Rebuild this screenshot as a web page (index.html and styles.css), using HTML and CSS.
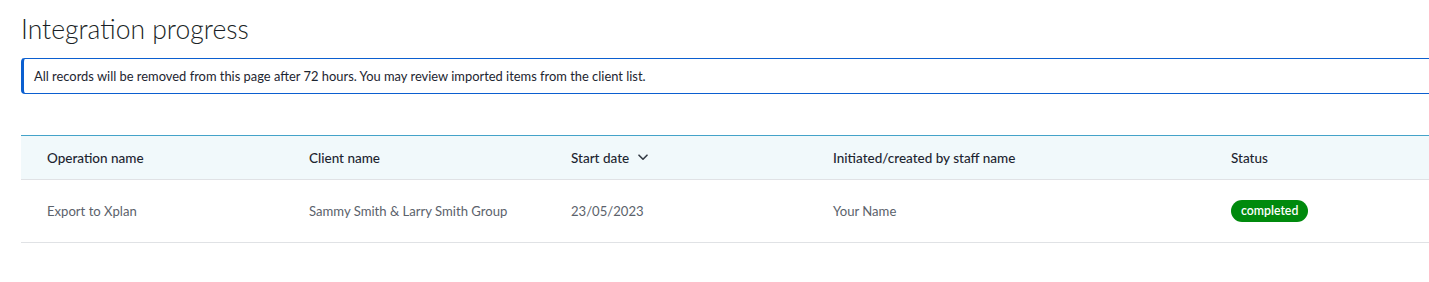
FILE: index.html
```html
<!DOCTYPE html>
<html lang="en">
<head>
  <meta charset="UTF-8">
  <meta name="viewport" content="width=device-width, initial-scale=1.0">
  <title>Integration progress</title>
  <link rel="stylesheet" href="styles.css">
</head>
<body>
  <main class="page">
    <h1 class="page-title">Integration progress</h1>

    <div class="notice">
      All records will be removed from this page after 72 hours. You may review imported items from the client list.
    </div>

    <table class="progress-table">
      <thead>
        <tr>
          <th class="col-op">Operation name</th>
          <th class="col-client">Client name</th>
          <th class="col-date">
            <span class="sortable">Start date
              <svg class="sort-icon" width="10" height="7" viewBox="0 0 10 7" aria-hidden="true">
                <path d="M1 1.2 L5 5.2 L9 1.2" fill="none" stroke="currentColor" stroke-width="1.6" stroke-linecap="round" stroke-linejoin="round"/>
              </svg>
            </span>
          </th>
          <th class="col-staff">Initiated/created by staff name</th>
          <th class="col-status">Status</th>
        </tr>
      </thead>
      <tbody>
        <tr>
          <td>Export to Xplan</td>
          <td>Sammy Smith &amp; Larry Smith Group</td>
          <td>23/05/2023</td>
          <td>Your Name</td>
          <td><span class="badge badge-success">completed</span></td>
        </tr>
      </tbody>
    </table>
  </main>
</body>
</html>
```

FILE: styles.css
```css
:root {
  --primary: #0b5fd0;
  --table-line: #44a3c9;
  --head-bg: #f1f9fb;
  --row-line: #e0e2e5;
  --text: #1d2530;
  --text-muted: #5b626b;
  --success: #008a0d;
}

* {
  margin: 0;
  padding: 0;
  box-sizing: border-box;
}

body {
  font-family: Lato, 'Open Sans', sans-serif;
  color: var(--text);
  background: #ffffff;
  overflow: hidden;
}

.page {
  padding: 14px 0 0 21px;
  width: 1450px;
}

.page-title {
  font-size: 26.5px;
  font-weight: 300;
  line-height: 30px;
  color: #1a1f26;
  margin-bottom: 14px;
}

.notice {
  height: 36px;
  display: flex;
  align-items: center;
  padding-left: 10px;
  font-size: 12.9px;
  color: #1d2530;
  border: 1.5px solid var(--primary);
  border-left-width: 3px;
  border-right: none;
  border-radius: 4px 0 0 4px;
}

.progress-table {
  margin-top: 41px;
  width: 100%;
  border-collapse: collapse;
  table-layout: fixed;
}

.progress-table thead tr {
  background: var(--head-bg);
  border-top: 1.5px solid var(--table-line);
  border-bottom: 1.5px solid var(--row-line);
}

.progress-table th {
  height: 44px;
  text-align: left;
  font-size: 13.5px;
  font-weight: 500;
  color: var(--text);
  padding-left: 26px;
}

.progress-table td {
  height: 63px;
  padding-left: 26px;
  font-size: 13.1px;
  color: var(--text-muted);
}

.progress-table tbody tr {
  border-bottom: 1.5px solid var(--row-line);
}

.col-op,
.col-client,
.col-date {
  width: 262px;
}

.col-staff {
  width: 398px;
}

.sortable {
  display: inline-flex;
  align-items: center;
  gap: 9px;
}

.sort-icon {
  color: #333a44;
}

.badge {
  display: inline-block;
  padding: 0 10px;
  height: 22px;
  line-height: 22px;
  border-radius: 11px;
  font-size: 12.3px;
  font-weight: 600;
  color: #ffffff;
}

.badge-success {
  background: var(--success);
}
```
